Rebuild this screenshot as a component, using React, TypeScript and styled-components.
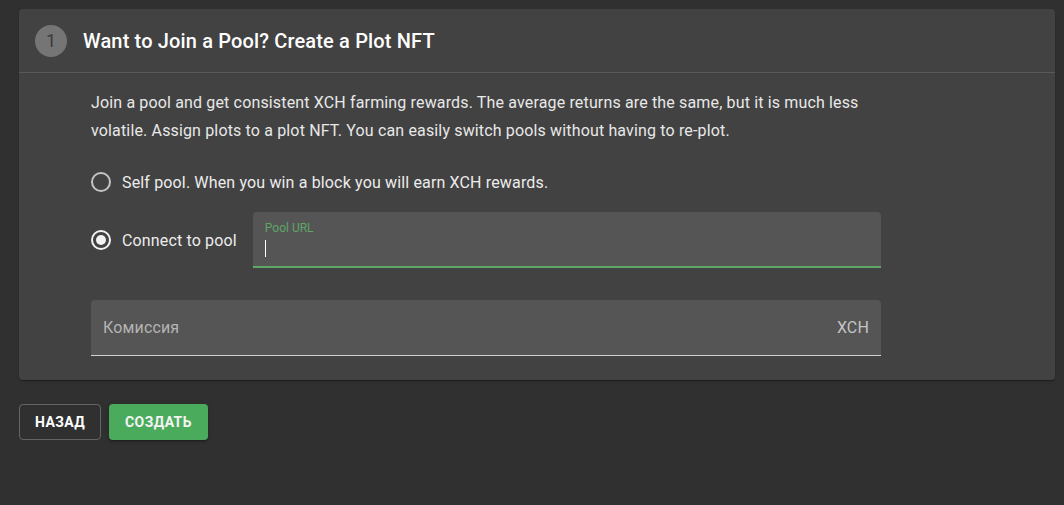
import React from "react";
import styled, { createGlobalStyle } from "styled-components";

const Global = createGlobalStyle`
  html, body { margin: 0; padding: 0; background: #303030; }
  body { font-family: Roboto, "Noto Sans", "Liberation Sans", sans-serif; color: #fff; }
  * { box-sizing: border-box; }
`;

const Page = styled.div`
  padding: 9px 9px 0 19px;
  min-height: 505px;
`;

const Card = styled.section`
  background: #424242;
  border-radius: 4px;
  box-shadow: 0 2px 1px -1px rgba(0,0,0,0.2), 0 1px 1px 0 rgba(0,0,0,0.14), 0 1px 3px 0 rgba(0,0,0,0.12);
`;

const Header = styled.header`
  display: flex;
  align-items: center;
  gap: 16px;
  height: 64px;
  padding-left: 16px;
  border-bottom: 1px solid rgba(255,255,255,0.12);
`;

const StepCircle = styled.div`
  width: 32px;
  height: 32px;
  border-radius: 50%;
  background: #757575;
  color: #3a3a3a;
  display: flex;
  align-items: center;
  justify-content: center;
  font-size: 18px;
  font-weight: 400;
`;

const Title = styled.h2`
  margin: 0;
  font-size: 20px;
  font-weight: 500;
  letter-spacing: 0.15px;
  color: #fff;
`;

const Body = styled.div`
  padding: 16px 0 24px 72px;
  max-width: 862px;
  display: flex;
  flex-direction: column;
  letter-spacing: 0.15px;
`;

const Description = styled.p`
  margin: 0;
  font-size: 16px;
  line-height: 28px;
  color: #e8e8e8;
`;

const Options = styled.div`
  margin-top: 16px;
  display: flex;
  flex-direction: column;
  gap: 9px;
`;

const OptionRow = styled.label`
  display: flex;
  align-items: center;
  min-height: 42px;
  font-size: 16px;
  color: #ececec;
`;

const RadioMark = styled.span<{ $checked?: boolean }>`
  width: 20px;
  height: 20px;
  border-radius: 50%;
  border: 2px solid ${(p) => (p.$checked ? "#f2f2f2" : "#c4c4c4")};
  display: flex;
  align-items: center;
  justify-content: center;
  margin-right: 11px;
  flex-shrink: 0;
  &::after {
    content: "";
    width: 10px;
    height: 10px;
    border-radius: 50%;
    background: #f2f2f2;
    display: ${(p) => (p.$checked ? "block" : "none")};
  }
`;

const OptionText = styled.span`
  margin-right: 16px;
`;

const Field = styled.div<{ $focused?: boolean }>`
  position: relative;
  flex: 1;
  height: 56px;
  background: #555555;
  border-radius: 4px 4px 0 0;
  border-bottom: ${(p) => (p.$focused ? "2px solid #5ea566" : "1px solid #d0d0d0")};
  display: flex;
  align-items: center;
  padding: 0 12px;
`;

const SmallLabel = styled.span`
  position: absolute;
  left: 12px;
  top: 9px;
  font-size: 12px;
  letter-spacing: 0;
  color: #5ea566;
`;

const Caret = styled.span`
  position: absolute;
  left: 12px;
  top: 28px;
  width: 1px;
  height: 17px;
  background: #fff;
`;

const Placeholder = styled.span`
  flex: 1;
  font-size: 16px;
  color: #b4b4b4;
`;

const Adornment = styled.span`
  font-size: 16px;
  color: #c4c4c4;
`;

const FeeRow = styled.div`
  margin-top: 32px;
  display: flex;
`;

const Actions = styled.div`
  margin-top: 24px;
  display: flex;
  gap: 8px;
`;

const Button = styled.button<{ $primary?: boolean }>`
  height: 36px;
  padding: 0 ${(p) => (p.$primary ? "16px" : "15px")};
  border-radius: 4px;
  font-family: Roboto, "Noto Sans", sans-serif;
  font-size: 14px;
  font-weight: 700;
  letter-spacing: 0.4px;
  text-transform: uppercase;
  cursor: pointer;
  color: ${(p) => (p.$primary ? "#f4f4f4" : "#fff")};
  background: ${(p) => (p.$primary ? "#4bab5c" : "transparent")};
  border: ${(p) => (p.$primary ? "none" : "1px solid rgba(255,255,255,0.25)")};
  box-shadow: ${(p) =>
    p.$primary
      ? "0 3px 1px -2px rgba(0,0,0,0.2), 0 2px 2px 0 rgba(0,0,0,0.14), 0 1px 5px 0 rgba(0,0,0,0.12)"
      : "none"};
`;

export default function App() {
  return (
    <>
      <Global />
      <Page>
        <Card>
          <Header>
            <StepCircle>1</StepCircle>
            <Title>Want to Join a Pool? Create a Plot NFT</Title>
          </Header>
          <Body>
            <Description>
              Join a pool and get consistent XCH farming rewards. The average returns are the same, but it is much less
              volatile. Assign plots to a plot NFT. You can easily switch pools without having to re-plot.
            </Description>
            <Options>
              <OptionRow>
                <RadioMark />
                <OptionText>Self pool. When you win a block you will earn XCH rewards.</OptionText>
              </OptionRow>
              <OptionRow>
                <RadioMark $checked />
                <OptionText>Connect to pool</OptionText>
                <Field $focused>
                  <SmallLabel>Pool URL</SmallLabel>
                  <Caret />
                </Field>
              </OptionRow>
            </Options>
            <FeeRow>
              <Field>
                <Placeholder>Комиссия</Placeholder>
                <Adornment>XCH</Adornment>
              </Field>
            </FeeRow>
          </Body>
        </Card>
        <Actions>
          <Button>Назад</Button>
          <Button $primary>Создать</Button>
        </Actions>
      </Page>
    </>
  );
}
